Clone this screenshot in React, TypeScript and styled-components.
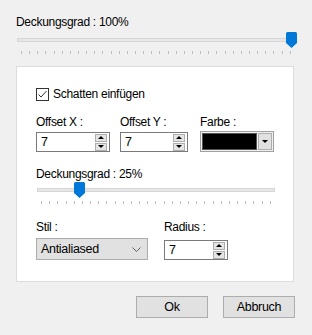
import styled, { createGlobalStyle } from "styled-components";

const GlobalStyle = createGlobalStyle`
  html, body {
    margin: 0;
    padding: 0;
    background: #f0f0f0;
  }
  body {
    font-family: "Liberation Sans", Arial, sans-serif;
    font-size: 12px;
    letter-spacing: -0.3px;
    color: #000;
  }
`;

const Window = styled.div`
  width: 312px;
  height: 335px;
  box-sizing: border-box;
  padding: 14px 17px 0 16px;
  display: flex;
  flex-direction: column;
  overflow: hidden;
`;

const Label = styled.div`
  height: 16px;
  line-height: 16px;
  white-space: nowrap;
`;

const SliderBox = styled.div<{ $w: number; $top: number }>`
  position: relative;
  width: ${(p) => p.$w}px;
  height: 23px;
  margin-top: ${(p) => p.$top}px;
`;

const Track = styled.div`
  margin: 6px 1px 0 1px;
  height: 4px;
  box-sizing: border-box;
  background: #e7e7e7;
  border: 1px solid #d6d6d6;
`;

const Ticks = styled.div`
  margin: 9px 5px 0 5px;
  height: 3px;
  display: flex;
  justify-content: space-between;
`;

const Tick = styled.div`
  width: 1px;
  height: 3px;
  background: #bdbdbd;
`;

const Thumb = styled.svg`
  position: absolute;
  top: 0;
  width: 11px;
  height: 16px;
`;

function Slider({ value, max, width, ticks, top }: { value: number; max: number; width: number; ticks: number; top: number }) {
  const span = width - 10;
  const center = 5 + (value / max) * span;
  return (
    <SliderBox $w={width} $top={top}>
      <Track />
      <Ticks>
        {Array.from({ length: ticks }).map((_, i) => (
          <Tick key={i} />
        ))}
      </Ticks>
      <Thumb viewBox="0 0 11 16" style={{ left: center - 5.5 }}>
        <path d="M1.5 0 H9.5 A1.5 1.5 0 0 1 11 1.5 V11 L5.5 16 L0 11 V1.5 A1.5 1.5 0 0 1 1.5 0 Z" fill="#0078d7" />
      </Thumb>
    </SliderBox>
  );
}

const Panel = styled.div`
  margin-top: 11px;
  width: 278px;
  box-sizing: border-box;
  background: #fff;
  border: 1px solid #dcdcdc;
  padding: 19px 19px 21px 19px;
  display: flex;
  flex-direction: column;
`;

const CheckRow = styled.label`
  height: 16px;
  display: flex;
  align-items: center;
  gap: 4px;
  line-height: 16px;
`;

const Row = styled.div<{ $top: number }>`
  display: flex;
  margin-top: ${(p) => p.$top}px;
`;

const Field = styled.div<{ $w: number }>`
  width: ${(p) => p.$w}px;
  display: flex;
  flex-direction: column;
`;

const SpinBox = styled.div<{ $w: number; $top: number }>`
  width: ${(p) => p.$w}px;
  height: 20px;
  margin-top: ${(p) => p.$top}px;
  box-sizing: border-box;
  border: 1px solid #7a7a7a;
  background: #fff;
  display: flex;
  align-items: center;
  justify-content: space-between;
  padding: 0 2px 0 4px;
  font-size: 12.5px;
`;

const SpinButtons = styled.div`
  display: flex;
  flex-direction: column;
  gap: 1px;
`;

const SpinButton = styled.div<{ $down?: boolean }>`
  width: 12px;
  height: 8px;
  box-sizing: border-box;
  border: 1px solid #adadad;
  background: #e5e5e5;
  display: flex;
  align-items: center;
  justify-content: center;

  &::after {
    content: "";
    width: 0;
    height: 0;
    border-left: 3px solid transparent;
    border-right: 3px solid transparent;
    ${(p) => (p.$down ? "border-top: 3px solid #000;" : "border-bottom: 3px solid #000;")}
  }
`;

function Spin({ value, width, top }: { value: string; width: number; top: number }) {
  return (
    <SpinBox $w={width} $top={top}>
      <span>{value}</span>
      <SpinButtons>
        <SpinButton />
        <SpinButton $down />
      </SpinButtons>
    </SpinBox>
  );
}

const ColorPicker = styled.div`
  width: 74px;
  height: 21px;
  margin-top: 1px;
  box-sizing: border-box;
  border: 1px solid #a0a0a0;
  background: #f0f0f0;
  padding: 1px;
  display: flex;
  gap: 1px;
`;

const Swatch = styled.div<{ $color: string }>`
  flex: 1;
  background: ${(p) => p.$color};
  border: 1px solid #555;
`;

const DropButton = styled.div`
  width: 14px;
  box-sizing: border-box;
  border: 1px solid #adadad;
  background: #e1e1e1;
  display: flex;
  align-items: center;
  justify-content: center;

  &::after {
    content: "";
    border-left: 3px solid transparent;
    border-right: 3px solid transparent;
    border-top: 3px solid #000;
  }
`;

const Combo = styled.div`
  width: 112px;
  height: 22px;
  margin-top: 3px;
  box-sizing: border-box;
  border: 1px solid #adadad;
  background: #e1e1e1;
  display: flex;
  align-items: center;
  justify-content: space-between;
  padding: 0 6px 0 4px;
  font-size: 12.5px;
`;

const ButtonRow = styled.div`
  margin-top: 14px;
  display: flex;
  justify-content: flex-end;
  gap: 15px;
`;

const Button = styled.button`
  width: 72px;
  height: 22px;
  box-sizing: border-box;
  border: 1px solid #adadad;
  background: #e1e1e1;
  font-family: inherit;
  font-size: 12.5px;
  letter-spacing: inherit;
  color: #000;
  padding: 0;
`;

export default function App() {
  return (
    <>
      <GlobalStyle />
      <Window>
        <Label>Deckungsgrad : 100%</Label>
        <Slider value={100} max={100} width={280} ticks={34} top={2} />
        <Panel>
          <CheckRow>
            <svg width="13" height="13" viewBox="0 0 13 13">
              <rect x="0.5" y="0.5" width="12" height="12" fill="#fff" stroke="#333" />
              <polyline points="2.5,6.5 5,9 10.5,3" fill="none" stroke="#333" strokeWidth="1" />
            </svg>
            <span>Schatten einfügen</span>
          </CheckRow>
          <Row $top={12}>
            <Field $w={84}>
              <Label>Offset X :</Label>
              <Spin value="7" width={74} top={2} />
            </Field>
            <Field $w={80}>
              <Label>Offset Y :</Label>
              <Spin value="7" width={68} top={2} />
            </Field>
            <Field $w={74}>
              <Label>Farbe :</Label>
              <ColorPicker>
                <Swatch $color="#000" />
                <DropButton />
              </ColorPicker>
            </Field>
          </Row>
          <Row $top={14}>
            <Label>Deckungsgrad : 25%</Label>
          </Row>
          <Slider value={25} max={150} width={240} ticks={29} top={0} />
          <Row $top={14}>
            <Field $w={128}>
              <Label>Stil :</Label>
              <Combo>
                <span>Antialiased</span>
                <svg width="9" height="5" viewBox="0 0 9 5">
                  <polyline points="0.5,0.5 4.5,4.5 8.5,0.5" fill="none" stroke="#606060" />
                </svg>
              </Combo>
            </Field>
            <Field $w={64}>
              <Label>Radius :</Label>
              <Spin value="7" width={64} top={5} />
            </Field>
          </Row>
        </Panel>
        <ButtonRow>
          <Button>Ok</Button>
          <Button>Abbruch</Button>
        </ButtonRow>
      </Window>
    </>
  );
}
